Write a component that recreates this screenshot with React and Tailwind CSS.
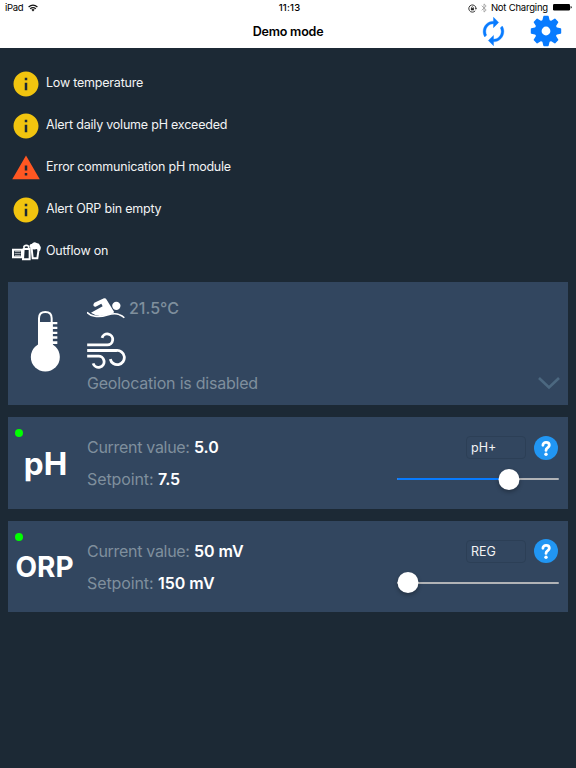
import React from "react";

const ALERTS = [
  { id: 1, icon: "info", text: "Low temperature" },
  { id: 2, icon: "info", text: "Alert daily volume pH exceeded" },
  { id: 3, icon: "warning", text: "Error communication pH module" },
  { id: 4, icon: "info", text: "Alert ORP bin empty" },
  { id: 5, icon: "outflow", text: "Outflow on" },
];

const MODULES = [
  {
    id: "ph",
    label: "pH",
    labelClass: "text-[31.5px] mt-[11.5px] ml-[-4px]",
    value: "5.0",
    setpoint: "7.5",
    mode: "pH+",
    percent: 69,
  },
  {
    id: "orp",
    label: "ORP",
    labelClass: "text-[28px] mt-[11.5px] ml-[-6px]",
    value: "50 mV",
    setpoint: "150 mV",
    mode: "REG",
    percent: 6.5,
  },
];

const GEAR_TEETH = [0, 45, 90, 135, 180, 225, 270, 315];

// Icons
const InfoIcon = () => (
  <svg viewBox="0 0 24 24" className="h-[30px] w-[30px]" fill="#f1c40f">
    <path d="M12 2C6.48 2 2 6.48 2 12s4.48 10 10 10 10-4.48 10-10S17.52 2 12 2zm1 15h-2v-6h2v6zm0-8h-2V7h2v2z" />
  </svg>
);

const WarningIcon = () => (
  <svg viewBox="0 0 24 24" className="h-[30px] w-[30px]" fill="#ff5722">
    <path d="M1 21h22L12 2 1 21zm12-3h-2v-2h2v2zm0-4h-2v-4h2v4z" />
  </svg>
);

const OutflowIcon = () => (
  <svg viewBox="34 170 90 90" className="h-[30px] w-[30px]" fill="none" stroke="#fff" strokeWidth="6">
    <path d="M40 208H67V231H40Z" strokeWidth="6" />
    <path d="M45 214H63M45 220H63M45 226H63" strokeWidth="2.500" opacity="0.8" />
    <path d="M72 206H90V237H70Z" />
    <path d="M73 203V198Q80 192 87 198V203" strokeWidth="5" />
    <path d="M96 204L99 234H113L117 206" />
    <path d="M90 198Q89 190 96 191Q103 182 111 188Q120 189 121 196Q126 201 121 211L115 213L112 206Q103 209 93 205Z" fill="#fff" stroke="none" />
  </svg>
);

const SyncIcon = () => (
  <svg viewBox="0 0 24 24" className="h-[31px] w-[31px] -scale-x-100" fill="#087bff" stroke="#087bff" strokeWidth="0.300">
    <path d="M12 4V1L8 5l4 4V6c3.31 0 6 2.69 6 6 0 1.01-.25 1.97-.7 2.8l1.46 1.46C19.54 15.03 20 13.57 20 12c0-4.42-3.58-8-8-8zm0 14c-3.31 0-6-2.69-6-6 0-1.01.25-1.97.7-2.8L5.24 7.74C4.46 8.97 4 10.43 4 12c0 4.42 3.58 8 8 8v3l4-4-4-4v3z" />
  </svg>
);

const GearIcon = () => (
  <svg viewBox="-18 -18 36 36" className="h-9 w-9" fill="#087bff">
    <circle r="7.800" fill="none" stroke="#087bff" strokeWidth="6.800" />
    {GEAR_TEETH.map((angle) => (
      <path key={angle} d="M-3.800 -10L-2.700 -14.600Q-2.600 -15.200 -2 -15.200H2Q2.600 -15.200 2.700 -14.600L3.800 -10Z" transform={`rotate(${angle})`} />
    ))}
  </svg>
);

const ThermometerIcon = () => (
  <svg viewBox="90 90 90 186" className="h-[62px] w-[30px]" fill="#fff">
    <path d="M117 200V115Q117 96 136 96Q155 96 155 115V200" fill="none" stroke="#fff" strokeWidth="6" />
    <path d="M116 126H172V133H158V140H172V147H158V155H172V162H158V169H172V176H158V184H172V192H158V205H116Z" />
    <circle cx="136" cy="231" r="43.5" />
  </svg>
);

const SwimmerIcon = () => (
  <svg viewBox="261 54 114 63" className="h-[21px] w-[38px]" fill="#fff">
    <circle cx="349" cy="77.500" r="12.500" />
    <path d="M283 68L312 55Q317 54 320 59L342 95Q342 99 336 101Q318 107 300 108Q286 107 273 98L308 79L304 71L287 80Q281 81 280 76Q280 71 283 68Z" />
    <path d="M261 97Q268 105 282 108Q300 112 322 105Q345 98 358 104Q367 107 373 113" fill="none" stroke="#fff" strokeWidth="4.500" />
  </svg>
);

const WindIcon = () => (
  <svg viewBox="261 154 117 112" className="h-[37px] w-[39px]" fill="none" stroke="#fff" strokeWidth="8.500">
    <path d="M261 193H321A16.500 16.500 0 1 0 306 172" />
    <path d="M261 210H349A21.500 21.500 0 1 1 331 236" />
    <path d="M261 227H293A17 17 0 1 1 279 249" />
  </svg>
);

const HelpIcon = () => (
  <svg viewBox="0 0 24 24" className="h-6 w-6" fill="none">
    <circle cx="12" cy="12" r="12" fill="#2196f3" />
    <path d="M8.900 9.300C8.900 5.500 15.300 5.500 15.300 9.300C15.300 11.700 12 11.600 12 14.400" stroke="#fff" strokeWidth="2.800" strokeLinecap="round" />
    <circle cx="12" cy="18.200" r="1.700" fill="#fff" />
  </svg>
);

const WifiIcon = () => (
  <svg viewBox="0 0 10 8" className="h-2 w-[10px]" fill="none" stroke="#111" strokeWidth="1.300">
    <path d="M.6 3Q5-.8 9.400 3M2.200 4.800Q5 2.500 7.800 4.800" />
    <path d="M3.400 5.700Q5 4.500 6.600 5.700L5 7.500Z" fill="#111" stroke="none" />
  </svg>
);

const RotationLockIcon = () => (
  <svg viewBox="0 0 9 9" className="h-[9px] w-[9px]" fill="none" stroke="#222" strokeWidth="0.900">
    <path d="M7.200 6.800A3.600 3.600 0 1 1 8 4.500" />
    <path d="M6.700 4.200H9L7.900 5.800Z" fill="#222" stroke="none" />
    <path d="M2.900 4.100H5.900V6.300H2.900Z" fill="#222" stroke="none" />
    <path d="M3.500 4.200V3.300Q4.400 2.100 5.300 3.300V4.200" strokeWidth="0.700" />
  </svg>
);

const BluetoothIcon = () => (
  <svg viewBox="0 0 6 10" className="h-[10px] w-[6px]" fill="none" stroke="#999" strokeWidth="0.800">
    <path d="M.7 2.700L5.200 7L3 9.100V.9L5.200 3L.7 7.300" />
  </svg>
);

const BatteryIcon = () => (
  <svg viewBox="0 0 19 7" className="h-[7px] w-[19px]" fill="#000">
    <rect x="0" y="0" width="17" height="6.500" rx="1.200" />
    <path d="M17.600 2Q18.800 2.400 18.800 3.300Q18.800 4.300 17.600 4.700Z" />
  </svg>
);

const ALERT_ICONS = {
  info: <InfoIcon />,
  warning: <WarningIcon />,
  outflow: <OutflowIcon />,
};

const Header = () => (
  <header className="h-12 bg-white text-black">
    <div className="grid h-4 grid-cols-3 items-center text-[9.5px] leading-4">
      <div className="flex items-center gap-[5px] pl-[5px]">
        <span className="tracking-[-0.3px]">iPad</span>
        <WifiIcon />
      </div>
      <div className="pl-[3px] text-center font-medium tracking-[0.2px]">11:13</div>
      <div className="flex items-center justify-end pr-[4px] whitespace-nowrap">
        <RotationLockIcon />
        <span className="ml-1 flex"><BluetoothIcon /></span>
        <span className="ml-[4px] tracking-[-0.2px]">Not Charging</span>
        <span className="ml-[5px] flex pb-px"><BatteryIcon /></span>
      </div>
    </div>
    <div className="grid h-[30px] grid-cols-3 grid-rows-[30px] items-center">
      <h1 className="col-start-2 pt-[2px] text-center text-[12.5px] font-semibold tracking-[-0.2px]">Demo mode</h1>
      <div className="flex items-center justify-end gap-[19px] pr-[12px]">
        <SyncIcon />
        <GearIcon />
      </div>
    </div>
  </header>
);

const Alert = ({ icon, text }) => (
  <li className="flex h-[42px] items-center">
    <span className="mr-[5px] flex pt-px">{ALERT_ICONS[icon]}</span>
    <span className="pt-px text-[12.5px] tracking-[-0.21px] text-[#f2f3f4]">{text}</span>
  </li>
);

const Slider = ({ percent }) => (
  <div className="relative flex h-[21px] w-[162px] items-center">
    <div className="h-[2px] w-full rounded-full bg-[#b1b3b6]">
      {percent > 10 && <div className="h-full rounded-full bg-[#087bff]" style={{ width: `${percent}%` }} />}
    </div>
    <div
      className="absolute top-0 h-[21px] w-[21px] -translate-x-1/2 rounded-full bg-white shadow-[0_2px_4px_rgba(0,0,0,0.3)]"
      style={{ left: `${percent}%` }}
    />
  </div>
);

const WeatherCard = () => (
  <section className="flex h-[123px] bg-[#32465f] text-[16px] text-[#7f8f9d]">
    <div className="flex w-[79px] shrink-0 items-center pl-[22px] pb-[5px]">
      <ThermometerIcon />
    </div>
    <div className="flex flex-1 flex-col pt-[14px]">
      <div className="flex h-6 items-center gap-1 font-medium">
        <SwimmerIcon />
        <span>21.5°C</span>
      </div>
      <div className="mt-[12px]">
        <WindIcon />
      </div>
      <p className="mt-[2px] leading-6 tracking-[-0.22px]">Geolocation is disabled</p>
    </div>
    <div className="flex items-end pr-[8px] pb-[15px]">
      <svg viewBox="0 0 22 14" className="h-[14px] w-[22px]" fill="none" stroke="#4c6880" strokeWidth="2.600">
        <path d="M1 2L11 11.500L21 2" />
      </svg>
    </div>
  </section>
);

const ModuleCard = ({ label, labelClass, value, setpoint, mode, percent }) => (
  <section className="flex h-[91.5px] bg-[#32465f]">
    <div className="w-[79px] shrink-0 pt-[12px]">
      <div className="ml-[7px] h-2 w-2 rounded-full bg-[#00ff00]" />
      <div className={`text-center leading-[30px] font-bold text-white ${labelClass}`}>{label}</div>
    </div>
    <div className="flex flex-1 flex-col gap-2 pt-[18.4px] text-[16px] leading-6 text-[#7f8f9d]">
      <p>
        <span className="tracking-[-0.3px]">Current value: </span>
        <span className="font-semibold text-white">{value}</span>
      </p>
      <p>
        <span className="tracking-[-0.1px]">Setpoint: </span>
        <span className="font-semibold text-white">{setpoint}</span>
      </p>
    </div>
    <div className="flex w-[162px] flex-col pt-[18.6px] mr-[9px]">
      <div className="flex items-center justify-end gap-2 pr-[1px]">
        <div className="h-[23px] w-[60px] rounded-[4px] border border-[#2c3f56] pl-[4px] text-[12.5px] leading-[21px] text-[#f2f3f4]">
          {mode}
        </div>
        <HelpIcon />
      </div>
      <div className="mt-[9px]">
        <Slider percent={percent} />
      </div>
    </div>
  </section>
);

const App = () => (
  <div className="h-screen overflow-hidden bg-[#1c2935] font-['Inter',sans-serif]">
    <Header />
    <ul className="pt-[14px] pl-[11px]">
      {ALERTS.map((alert) => (
        <Alert key={alert.id} {...alert} />
      ))}
    </ul>
    <main className="mt-[10px] flex flex-col gap-3 px-2">
      <WeatherCard />
      {MODULES.map((module) => (
        <ModuleCard key={module.id} {...module} />
      ))}
    </main>
  </div>
);

export default App;
